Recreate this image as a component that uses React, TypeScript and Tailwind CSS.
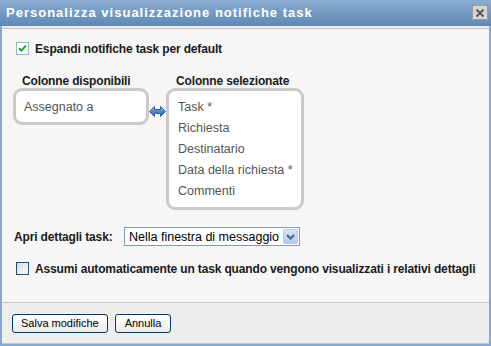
import React from "react";

const font = { fontFamily: '"Liberation Sans", Arial, sans-serif' };

function CheckedBox() {
  return (
    <svg width="13" height="13" viewBox="0 0 13 13" className="shrink-0">
      <rect x="0.5" y="0.5" width="12" height="12" fill="#ffffff" stroke="#2f6aa8" strokeDasharray="1 1" />
      <path d="M3 6.2 L5.3 8.6 L10 3.6" fill="none" stroke="#21a121" strokeWidth="2" />
    </svg>
  );
}

function EmptyBox() {
  return (
    <div className="w-[13px] h-[13px] shrink-0 border border-[#1c5180] bg-gradient-to-br from-[#dcdcd7] to-[#fbfbf9]" />
  );
}

function Arrow() {
  return (
    <svg width="17" height="11" viewBox="0 0 17 11">
      <defs>
        <linearGradient id="ag" x1="0" y1="0" x2="0" y2="1">
          <stop offset="0" stopColor="#8fb6e0" />
          <stop offset="1" stopColor="#1f5a9c" />
        </linearGradient>
      </defs>
      <path
        d="M0.5 5.5 L5.5 0.5 L5.5 3.5 L11.5 3.5 L11.5 0.5 L16.5 5.5 L11.5 10.5 L11.5 7.5 L5.5 7.5 L5.5 10.5 Z"
        fill="url(#ag)"
        stroke="#2a5f9e"
        strokeWidth="1"
        strokeLinejoin="round"
      />
    </svg>
  );
}

export default function App() {
  return (
    <div className="w-[491px] h-[346px] flex flex-col overflow-hidden" style={font}>
      {/* title bar */}
      <div className="h-[26px] shrink-0 flex items-start justify-between bg-gradient-to-b from-[#8aadd1] to-[#5f88b3] pl-[6px] pr-[3px]">
        <div className="pt-[5px] text-white font-bold text-[13px] leading-[15px] tracking-[1px]">
          Personalizza visualizzazione notifiche task
        </div>
        <div className="mt-[5px] w-[16px] h-[15px] border border-[#9a9a9a] bg-[#d6d6d4] flex items-center justify-center">
          <svg width="10" height="10" viewBox="0 0 10 10">
            <path d="M1.5 1.5 L8.5 8.5 M8.5 1.5 L1.5 8.5" stroke="#5a5a5a" strokeWidth="2" />
          </svg>
        </div>
      </div>
      <div className="flex-1 flex flex-col border-x-2 border-b-2 border-[#86aad0]">
        <div className="h-[2px] bg-[#ececec] shrink-0" />
        {/* content */}
        <div className="h-[275px] shrink-0 border-t border-b border-[#c4c4c4] bg-[#f6f6f6] flex flex-col pl-[14px] text-[12px] leading-[14px]">
          <div className="mt-[13px] h-[13px] flex items-center gap-[6px]">
            <CheckedBox />
            <span className="font-bold text-[#1a1a1a] tracking-[-0.15px]">Espandi notifiche task per default</span>
          </div>

          <div className="mt-[19px] flex items-start -ml-[3px]">
            <div className="flex flex-col">
              <div className="pl-[9px] h-[14px] font-bold text-[#1a1a1a] tracking-[-0.15px]">Colonne disponibili</div>
              <div className="w-[136px] h-[37px] border-[3px] border-[#cacaca] rounded-[9px] bg-white pl-[8px] pt-[9px] text-[#555] text-[12.5px]">
                Assegnato a
              </div>
            </div>
            <div className="mt-[32px] w-[17px] flex justify-center">
              <Arrow />
            </div>
            <div className="flex flex-col">
              <div className="pl-[10px] h-[14px] font-bold text-[#1a1a1a] tracking-[-0.15px]">Colonne selezionate</div>
              <div className="w-[138px] h-[122px] border-[3px] border-[#cacaca] rounded-[9px] bg-white pl-[9px] pt-[6px] text-[#555] text-[12.5px] leading-[21px] flex flex-col">
                <span>Task *</span>
                <span>Richiesta</span>
                <span>Destinatario</span>
                <span>Data della richiesta *</span>
                <span>Commenti</span>
              </div>
            </div>
          </div>

          <div className="mt-[17px] flex items-center -ml-[2px]">
            <span className="w-[110px] font-bold text-[#1a1a1a] tracking-[-0.15px]">Apri dettagli task:</span>
            <div className="w-[176px] h-[19px] border border-[#7f9db9] bg-white flex items-center justify-between pl-[4px] pr-[1px]">
              <span className="text-black text-[12.5px]">Nella finestra di messaggio</span>
              <div className="w-[15px] h-[15px] rounded-[2px] bg-gradient-to-b from-[#d7e3fb] to-[#b4c8f2] border border-[#b6c9f0] flex items-center justify-center">
                <svg width="9" height="6" viewBox="0 0 9 6">
                  <path d="M1 1 L4.5 4.5 L8 1" fill="none" stroke="#4d6185" strokeWidth="2" />
                </svg>
              </div>
            </div>
          </div>

          <div className="mt-[16px] h-[13px] flex items-center gap-[6px]">
            <EmptyBox />
            <span className="font-bold text-[#1a1a1a] whitespace-nowrap tracking-[-0.15px]">
              Assumi automaticamente un task quando vengono visualizzati i relativi dettagli
            </span>
          </div>
        </div>
        {/* footer */}
        <div className="flex-1 bg-[#eeeeec] border-b border-[#c4c4c4] flex items-start gap-[7px] pl-[10px] pt-[11px]">
          <button className="h-[19px] px-[8px] border border-[#003c74] rounded-[3px] bg-gradient-to-b from-[#ffffff] to-[#ecebe6] text-[11px] leading-[13px] text-black">
            Salva modifiche
          </button>
          <button className="h-[19px] px-[9px] border border-[#003c74] rounded-[3px] bg-gradient-to-b from-[#ffffff] to-[#ecebe6] text-[11px] leading-[13px] text-black">
            Annulla
          </button>
        </div>
      </div>
    </div>
  );
}
